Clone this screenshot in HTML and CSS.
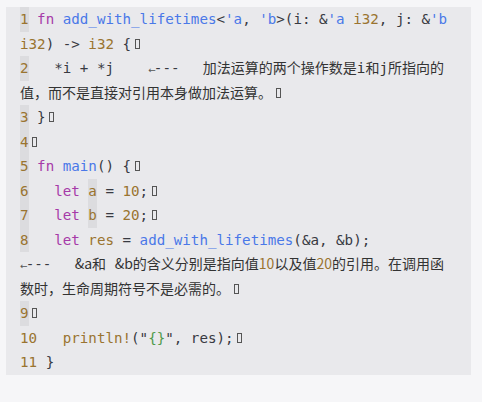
FILE: index.html
```html
<!DOCTYPE html>
<html lang="zh">
<head>
<meta charset="utf-8">
<title>Lifetimes</title>
<link rel="stylesheet" href="styles.css">
</head>
<body>
<div class="page">
<pre class="code"><span class="ln hl">1</span> <span class="kw">fn</span> <span class="fn">add_with_lifetimes</span>&lt;<span class="lt">'a</span>, <span class="lt">'b</span>&gt;(i: &amp;<span class="lt">'a</span> <span class="ty">i32</span>, j: &amp;<span class="lt">'b</span> <span class="ty">i32</span>) -&gt; <span class="ty">i32</span> {<span class="cr"></span>
<span class="ln hl">2</span>   *i + *j    <span class="arr">←</span>---  <span class="note">  加法运算的两个操作数是<span class="m">i</span>和<span class="m">j</span>所指向的值，而不是直接对引用本身做加法运算。</span><span class="cr"></span>
<span class="ln hl">3</span> }<span class="cr"></span>
<span class="ln hl">4</span><span class="cr"></span>
<span class="ln hl">5</span> <span class="kw">fn</span> <span class="fn">main</span>() {<span class="cr"></span>
<span class="ln hl">6</span>   <span class="kw">let</span> <span class="var hl">a</span> = <span class="ty">10</span>;<span class="cr"></span>
<span class="ln hl">7</span>   <span class="kw">let</span> <span class="var hl">b</span> = <span class="ty">20</span>;<span class="cr"></span>
<span class="ln hl">8</span>   <span class="kw">let</span> <span class="var">res</span> = <span class="fn">add_with_lifetimes</span>(&amp;a, &amp;b);
<span class="arr">←</span>---  <span class="note">  &amp;a和</span> <span class="note">&amp;b的含义分别是指向值<span class="nnum">10</span>以及值<span class="nnum">20</span>的引用。在调用函数时，生命周期符号不是必需的。</span><span class="cr"></span>
<span class="ln hl">9</span><span class="cr"></span>
<span class="ln">10</span>   <span class="mac">println!</span>("<span class="str">{}</span>", res);<span class="cr"></span>
<span class="ln">11</span> }</pre>
</div>
</body>
</html>
```

FILE: styles.css
```css
html, body {
  margin: 0;
  padding: 0;
  background: #f6f6f8;
}

.page {
  padding: 7px 11px 28px 6px;
}

.code {
  margin: 0;
  padding: 0 20px 0 14px;
  background: #e9e9ec;
  color: #383a42;
  font-family: "DejaVu Sans Mono", "Noto Sans CJK SC", monospace;
  font-size: 14.2px;
  line-height: 24.5px;
  white-space: pre-wrap;
  word-break: normal;
}

.hl {
  display: inline-block;
  background: #dcdcdf;
}

.ln { color: #9a7430; }
.kw { color: #a63aa8; }
.fn { color: #4a78e8; }
.lt { color: #4a78e8; }
.ty { color: #9a7430; }
.var { color: #9a7430; }
.mac { color: #9a7430; }
.str { color: #4f9a4a; }

.note {
  font-family: "Noto Sans CJK SC", sans-serif;
  font-size: 14px;
  line-height: 1;
  color: #333;
}

.note .m {
  font-family: "DejaVu Sans Mono", monospace;
  font-size: 14.2px;
}

.note .nnum {
  color: #9a7430;
}

.arr {
  display: inline-block;
  width: 1ch;
  text-align: center;
  font-family: "DejaVu Sans", sans-serif;
  font-size: 9px;
  line-height: 1;
  color: #555;
}

.cr {
  display: inline-block;
  box-sizing: border-box;
  width: 5px;
  height: 10px;
  margin: 0 0.5px 0 3.5px;
  border: 1px solid #555;
}
```
